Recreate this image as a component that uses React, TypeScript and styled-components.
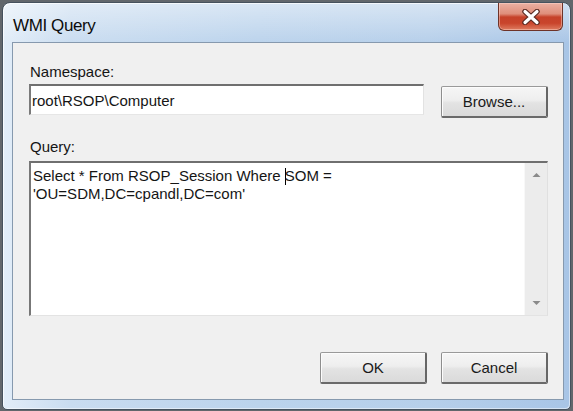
import React from 'react';
import styled, { createGlobalStyle } from 'styled-components';

const GlobalStyle = createGlobalStyle`
  html, body {
    margin: 0;
    padding: 0;
  }
  body {
    width: 573px;
    height: 411px;
    overflow: hidden;
    background: #62676c;
    font-family: "Liberation Sans", Arial, sans-serif;
    color: #151515;
  }
`;

const Window = styled.div`
  box-sizing: border-box;
  margin: 2px 0 0 2px;
  width: 569px;
  height: 408px;
  border: 1px solid #46525e;
  border-radius: 8px 8px 5px 5px;
  padding: 0 6px 9px 9px;
  display: flex;
  flex-direction: column;
  background:
    linear-gradient(180deg, rgba(255, 255, 255, 0.45) 0%, rgba(255, 255, 255, 0) 10%),
    linear-gradient(90deg, #e2edf8 0%, #c9dcf0 12%, #bbd3ec 45%, #b6cfea 75%, #a8c5e6 100%);
  box-shadow: inset 1px 1px 0 rgba(255, 255, 255, 0.7), inset -1px -1px 0 rgba(255, 255, 255, 0.5);
`;

const TitleBar = styled.div`
  height: 40px;
  display: flex;
  justify-content: space-between;
  align-items: flex-start;
`;

const Title = styled.div`
  margin: 13px 0 0 1px;
  font-size: 17px;
  line-height: 20px;
  letter-spacing: -0.4px;
  color: #0c0c0c;
`;

const CloseButton = styled.div`
  box-sizing: border-box;
  width: 65px;
  height: 28px;
  margin-right: 1px;
  border: 1px solid #6e3328;
  border-top: none;
  border-radius: 0 0 6px 6px;
  display: flex;
  align-items: center;
  justify-content: center;
  background: linear-gradient(
    180deg,
    #ebb1a3 0%,
    #df8e7b 40%,
    #c6422a 52%,
    #c9452c 75%,
    #de7c60 100%
  );
  box-shadow: inset 0 0 0 1px rgba(255, 220, 210, 0.45);
`;

const Client = styled.div`
  flex: 1;
  box-sizing: border-box;
  border: 1px solid #8699ae;
  background: #f0f0f0;
  padding: 20px 15px 15px 16px;
  display: flex;
  flex-direction: column;
`;

const Label = styled.div<{ $gap?: number }>`
  font-size: 15px;
  line-height: 17px;
  padding-left: 1px;
  margin-top: ${p => p.$gap ?? 0}px;
`;

const Row = styled.div`
  margin-top: 4px;
  display: flex;
  align-items: flex-start;
  gap: 17px;
`;

const TextBox = styled.div`
  box-sizing: border-box;
  width: 395px;
  height: 31px;
  background: #fff;
  border-top: 2px solid #6f6f6f;
  border-left: 2px solid #7a7a7a;
  border-right: 1px solid #e2e2e2;
  border-bottom: 1px solid #e6e6e6;
  padding-left: 1px;
  display: flex;
  align-items: center;
  font-size: 15px;
  line-height: 17px;
`;

const Button = styled.div<{ $top?: number }>`
  box-sizing: border-box;
  width: 107px;
  height: 32px;
  margin-top: ${p => p.$top ?? 0}px;
  border-top: 1px solid #9a9a9a;
  border-left: 1px solid #8e8e8e;
  border-right: 2px solid #666;
  border-bottom: 2px solid #6a6a6a;
  border-radius: 2px;
  background: linear-gradient(180deg, #f6f6f6 0%, #eeeeee 45%, #e3e3e3 55%, #dadada 100%);
  box-shadow: inset 1px 1px 0 #fcfcfc;
  display: flex;
  align-items: center;
  justify-content: center;
  font-size: 15px;
  color: #1a1a1a;
`;

const QueryBox = styled.div`
  margin-top: 6px;
  box-sizing: border-box;
  height: 155px;
  background: #fff;
  border-top: 2px solid #6f6f6f;
  border-left: 2px solid #777;
  border-right: 1px solid #e0e0e0;
  border-bottom: 1px solid #e3e3e3;
  display: flex;
`;

const QueryText = styled.div`
  flex: 1;
  padding: 4px 0 0 2px;
  font-size: 15px;
  line-height: 17px;
`;

const Caret = styled.span`
  display: inline-block;
  width: 1px;
  height: 17px;
  margin-right: -1px;
  background: #000;
  vertical-align: -4px;
`;

const ScrollBar = styled.div`
  width: 22px;
  background: #ececec;
  border-left: 1px solid #f8f8f8;
  display: flex;
  flex-direction: column;
  justify-content: space-between;
`;

const ScrollArrow = styled.div`
  height: 24px;
  display: flex;
  align-items: center;
  justify-content: center;
`;

const Footer = styled.div`
  margin-top: 36px;
  display: flex;
  justify-content: flex-end;
  gap: 14px;
`;

const Arrow: React.FC<{ up?: boolean }> = ({ up }) => (
  <svg width="9" height="6" viewBox="0 0 9 6">
    <path d={up ? 'M0.5 5 L4.5 1 L8.5 5 Z' : 'M0.5 1 L4.5 5 L8.5 1 Z'} fill="#8a8a8a" />
  </svg>
);

const CloseGlyph = () => (
  <svg width="20" height="16" viewBox="0 0 20 16">
    <path d="M4 2.5 L16 13.5 M16 2.5 L4 13.5" stroke="#5a2a22" strokeWidth="5.5" strokeLinecap="round" />
    <path d="M4 2.5 L16 13.5 M16 2.5 L4 13.5" stroke="#ffffff" strokeWidth="3.2" strokeLinecap="round" />
  </svg>
);

const App: React.FC = () => {
  return (
    <>
      <GlobalStyle />
      <Window>
        <TitleBar>
          <Title>WMI Query</Title>
          <CloseButton>
            <CloseGlyph />
          </CloseButton>
        </TitleBar>
        <Client>
          <Label>Namespace:</Label>
          <Row>
            <TextBox>root\RSOP\Computer</TextBox>
            <Button $top={2}>Browse...</Button>
          </Row>
          <Label $gap={20}>Query:</Label>
          <QueryBox>
            <QueryText>
              Select * From RSOP_Session Where <Caret />SOM =
              <br />
              'OU=SDM,DC=cpandl,DC=com'
            </QueryText>
            <ScrollBar>
              <ScrollArrow>
                <Arrow up />
              </ScrollArrow>
              <ScrollArrow>
                <Arrow />
              </ScrollArrow>
            </ScrollBar>
          </QueryBox>
          <Footer>
            <Button>OK</Button>
            <Button>Cancel</Button>
          </Footer>
        </Client>
      </Window>
    </>
  );
};

export default App;
